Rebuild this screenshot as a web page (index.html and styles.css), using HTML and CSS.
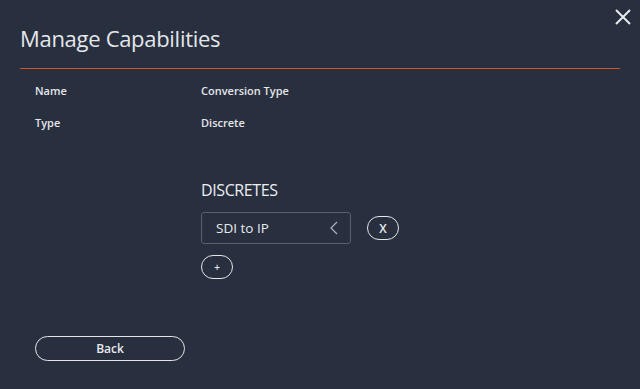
FILE: index.html
```html
<!DOCTYPE html>
<html>
<head>
<meta charset="utf-8">
<link rel="stylesheet" href="styles.css">
</head>
<body>
<div class="dialog">
  <button class="close" aria-label="Close">
    <svg width="18" height="18" viewBox="0 0 18 18"><path d="M2 2 L16 16 M16 2 L2 16" stroke="#e8eaee" stroke-width="2" fill="none"/></svg>
  </button>
  <h1 class="title">Manage Capabilities</h1>
  <div class="rule"></div>
  <div class="props">
    <div class="prop"><span class="key">Name</span><span class="val">Conversion Type</span></div>
    <div class="prop"><span class="key">Type</span><span class="val">Discrete</span></div>
  </div>
  <div class="discretes">
    <h2 class="section">DISCRETES</h2>
    <div class="row">
      <div class="select"><span>SDI to IP</span>
        <svg width="8" height="14" viewBox="0 0 8 14"><path d="M7 1 L1 7 L7 13" stroke="#a9adb7" stroke-width="1.3" fill="none"/></svg>
      </div>
      <button class="pill small">X</button>
    </div>
    <button class="pill small plus">+</button>
  </div>
  <div class="footer">
    <button class="pill back">Back</button>
  </div>
</div>
</body>
</html>
```

FILE: styles.css
```css
html, body {
  margin: 0;
  padding: 0;
  background: #282f3e;
  width: 640px;
  height: 389px;
  overflow: hidden;
  font-family: "Open Sans", "Noto Sans", sans-serif;
  color: #e6e8ec;
}
.dialog {
  position: relative;
  padding: 0 20px;
  height: 389px;
  box-sizing: border-box;
}
.close {
  position: absolute;
  top: 8px;
  right: 8px;
  background: none;
  border: 0;
  padding: 0;
  width: 18px;
  height: 18px;
  cursor: pointer;
}
.close svg { display: block; }
.title {
  margin: 0;
  padding-top: 23px;
  font-weight: 400;
  font-size: 22px;
  line-height: 30px;
  color: #e4e6ea;
  letter-spacing: -0.3px;
}
.rule {
  margin-top: 15px;
  height: 0;
  border-top: 1px solid #d4521c;
}
.props {
  padding: 14px 0 0 15px;
  display: flex;
  flex-direction: column;
  gap: 16px;
}
.prop {
  display: flex;
  font-size: 11px;
  font-weight: 600;
  line-height: 16px;
  color: #e4e6ea;
}
.key { width: 166px; }
.discretes {
  margin-left: 181px;
  padding-top: 48px;
}
.section {
  margin: 0;
  font-size: 16px;
  font-weight: 400;
  line-height: 22px;
  color: #eceef2;
  letter-spacing: -0.4px;
}
.row {
  margin-top: 11px;
  display: flex;
  align-items: center;
  gap: 16px;
}
.select {
  width: 150px;
  height: 32px;
  box-sizing: border-box;
  border: 1px solid #5a606d;
  border-radius: 3px;
  display: flex;
  align-items: center;
  justify-content: space-between;
  padding: 0 12px 0 14px;
  font-size: 13.5px;
  color: #e8eaee;
}
.pill {
  background: transparent;
  border: 1px solid #e4e6ea;
  border-radius: 14px;
  color: #e8eaee;
  font-family: inherit;
  font-weight: 600;
  padding: 0;
  box-sizing: border-box;
}
.small {
  width: 32px;
  height: 24px;
  font-size: 12px;
}
.plus {
  display: block;
  margin-top: 11px;
  font-size: 10px;
  height: 24px;
}
.footer {
  padding: 57px 0 0 15px;
}
.back {
  width: 150px;
  height: 25px;
  font-size: 12px;
  border-radius: 13px;
}
```
